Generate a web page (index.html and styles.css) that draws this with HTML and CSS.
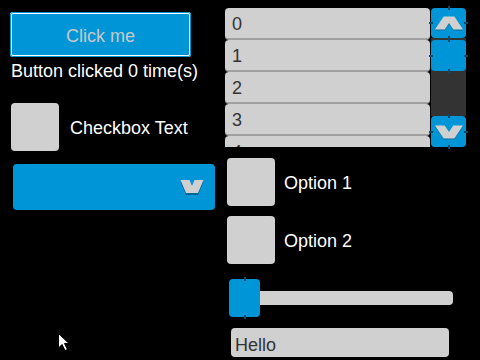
FILE: index.html
```html
<!doctype html>
<html>
<head>
	<meta charset='utf-8'>
	<title>Widgets</title>
	<link rel="stylesheet" href="styles.css">
</head>
<body>
<div class='page'>
	<div class='col-left'>
		<div class='btn'>Click me</div>
		<div class='count'>Button clicked 0 time(s)</div>
		<div class='check-row'><span class='box'></span><span class='label'>Checkbox Text</span></div>
		<div class='dropdown'>
			<svg class='drop-arrow' width='24' height='14' viewBox='0 0 23 14'><polygon points='0,0 9,0 11.5,6 14,0 23,0 17.5,13 5.5,13' fill='#d0d0d0'/></svg>
		</div>
	</div>

	<div class='col-right'>
		<div class='listbox'>
			<ul class='items'>
				<li>0</li>
				<li>1</li>
				<li>2</li>
				<li>3</li>
				<li>4</li>
			</ul>
			<div class='scrollbar'>
				<div class='sb-btn'><svg width='28' height='14' viewBox='0 0 26 12'><polygon points='0,12 9,12 13,6 17,12 26,12 18,0 8,0' fill='#d0d0d0'/></svg></div>
				<div class='track'><div class='thumb'></div></div>
				<div class='sb-btn sb-down'><svg width='28' height='14' viewBox='0 0 26 12'><polygon points='0,0 9,0 13,6 17,0 26,0 18,12 8,12' fill='#d0d0d0'/></svg></div>
			</div>
		</div>

		<div class='options'>
			<div class='check-row'><span class='box'></span><span class='label'>Option 1</span></div>
			<div class='check-row'><span class='box'></span><span class='label'>Option 2</span></div>
		</div>

		<div class='slider'>
			<div class='slider-thumb'></div>
			<div class='slider-track'></div>
		</div>

		<div class='input'>Hello</div>
	</div>
</div>

<svg class='cursor' width='13' height='19' viewBox='0 0 13 19'><polygon points='0.5,0.5 0.5,15 4,11.5 7,17.5 9.5,16.5 6.5,10.5 11,10.5' fill='#fff' stroke='#000' stroke-width='1'/></svg>
</body>
</html>
```

FILE: styles.css
```css
*{margin:0;padding:0;box-sizing:border-box;}
html,body{width:480px;height:360px;overflow:hidden;background:#000;}
body{font-family:"Liberation Sans",Arial,sans-serif;font-size:18px;color:#fff;position:relative;}

.page{display:flex;}
.col-left{width:215px;padding:12px 0 0 10px;display:flex;flex-direction:column;align-items:flex-start;}
.col-right{margin-left:10px;padding-top:8px;display:flex;flex-direction:column;align-items:flex-start;}

/* button */
.btn{width:181px;height:45px;background:#0095d7;border-radius:3px;box-shadow:inset 0 0 0 1px #0095d7,inset 0 0 0 2px #fff;
  color:#c8c8c8;display:flex;align-items:center;justify-content:center;padding-top:3px;}
.count{margin-top:4px;padding-left:1px;line-height:21px;}

/* checkboxes */
.check-row{display:flex;align-items:center;}
.box{width:48px;height:48px;background:#d0d0d0;border-radius:4px;}
.label{padding-top:2px;}
.col-left .check-row{margin:21px 0 0 1px;}
.col-left .check-row .label{margin-left:11px;}
.options{margin:11px 0 0 2px;display:flex;flex-direction:column;gap:10px;}
.options .label{margin-left:9px;}

/* dropdown */
.dropdown{margin:13px 0 0 3px;width:202px;height:46px;background:#0095d7;border-radius:4px;display:flex;align-items:center;justify-content:flex-end;padding:0 11px 1px 0;}
.drop-arrow{filter:drop-shadow(0 2px 0 rgba(0,0,0,.3));}

/* list box */
.listbox{display:flex;height:139px;width:241px;}
.items{list-style:none;width:205px;height:139px;overflow:hidden;}
.items li{height:32px;line-height:32px;padding-left:7px;background:#d0d0d0;color:#333;border-radius:4px;border-bottom:2px solid #a0a0a0;}
.scrollbar{margin-left:1px;width:35px;display:flex;flex-direction:column;}
.sb-btn{height:30px;background:#0095d7;border-radius:4px;display:flex;align-items:center;justify-content:center;position:relative;}
.sb-btn svg{filter:drop-shadow(0 1px 0 rgba(0,0,0,.25));}
.sb-down{height:31px;}
.track{flex:1;background:#333;padding-top:2px;}
.thumb{height:31px;background:#0095d7;border-radius:4px;position:relative;}

.sb-btn::before,.thumb::before,.slider-thumb::before{content:'';position:absolute;left:50%;top:-2px;bottom:-2px;width:2px;margin-left:-1px;
  background:linear-gradient(#0a4a6e 0,#0a4a6e 4px,transparent 4px,transparent calc(100% - 4px),#0a4a6e calc(100% - 4px));}
.sb-btn::after,.thumb::after{content:'';position:absolute;top:50%;left:-2px;right:-2px;height:2px;margin-top:-1px;
  background:linear-gradient(90deg,#0a4a6e 0,#0a4a6e 4px,transparent 4px,transparent calc(100% - 4px),#0a4a6e calc(100% - 4px));}

/* slider */
.slider{margin:15px 0 0 4px;width:224px;height:38px;display:flex;align-items:center;}
.slider-thumb{width:31px;height:38px;background:#0095d7;border-radius:4px;position:relative;z-index:1;}
.slider-track{flex:1;height:14px;background:#d0d0d0;border-radius:0 4px 4px 0;margin-left:-2px;}

/* text input */
.input{margin:11px 0 0 6px;width:218px;height:29px;background:#d0d0d0;border-radius:4px;color:#333;padding:6px 0 0 4px;line-height:22px;}

.cursor{position:absolute;left:58px;top:333px;}
```
